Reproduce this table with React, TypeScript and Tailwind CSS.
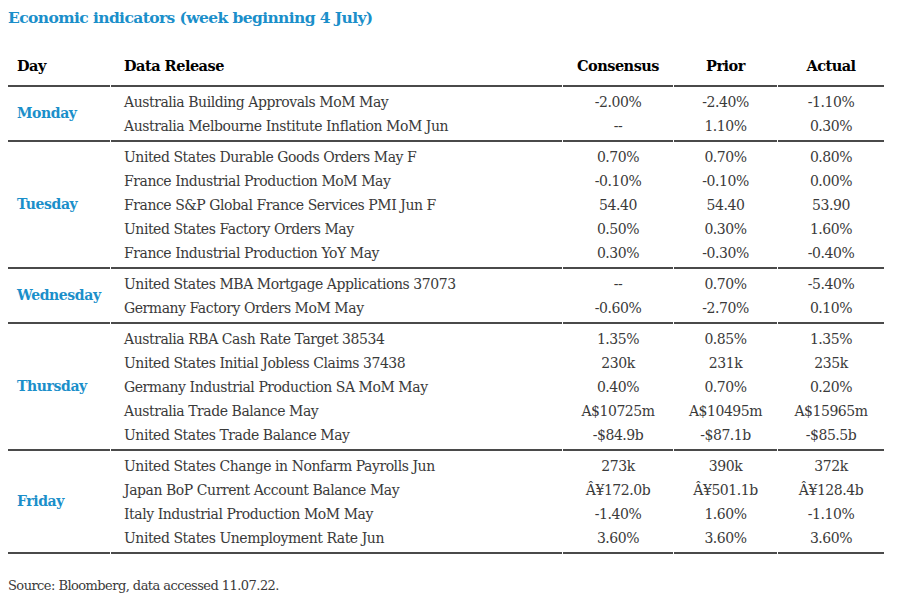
import React from 'react';

interface Release {
  name: string;
  consensus: string;
  prior: string;
  actual: string;
}

interface DayGroup {
  day: string;
  rows: Release[];
}

const data: DayGroup[] = [
  {
    day: 'Monday',
    rows: [
      { name: 'Australia Building Approvals MoM May', consensus: '-2.00%', prior: '-2.40%', actual: '-1.10%' },
      { name: 'Australia Melbourne Institute Inflation MoM Jun', consensus: '--', prior: '1.10%', actual: '0.30%' },
    ],
  },
  {
    day: 'Tuesday',
    rows: [
      { name: 'United States Durable Goods Orders May F', consensus: '0.70%', prior: '0.70%', actual: '0.80%' },
      { name: 'France Industrial Production MoM May', consensus: '-0.10%', prior: '-0.10%', actual: '0.00%' },
      { name: 'France S&P Global France Services PMI Jun F', consensus: '54.40', prior: '54.40', actual: '53.90' },
      { name: 'United States Factory Orders May', consensus: '0.50%', prior: '0.30%', actual: '1.60%' },
      { name: 'France Industrial Production YoY May', consensus: '0.30%', prior: '-0.30%', actual: '-0.40%' },
    ],
  },
  {
    day: 'Wednesday',
    rows: [
      { name: 'United States MBA Mortgage Applications 37073', consensus: '--', prior: '0.70%', actual: '-5.40%' },
      { name: 'Germany Factory Orders MoM May', consensus: '-0.60%', prior: '-2.70%', actual: '0.10%' },
    ],
  },
  {
    day: 'Thursday',
    rows: [
      { name: 'Australia RBA Cash Rate Target 38534', consensus: '1.35%', prior: '0.85%', actual: '1.35%' },
      { name: 'United States Initial Jobless Claims 37438', consensus: '230k', prior: '231k', actual: '235k' },
      { name: 'Germany Industrial Production SA MoM May', consensus: '0.40%', prior: '0.70%', actual: '0.20%' },
      { name: 'Australia Trade Balance May', consensus: 'A$10725m', prior: 'A$10495m', actual: 'A$15965m' },
      { name: 'United States Trade Balance May', consensus: '-$84.9b', prior: '-$87.1b', actual: '-$85.5b' },
    ],
  },
  {
    day: 'Friday',
    rows: [
      { name: 'United States Change in Nonfarm Payrolls Jun', consensus: '273k', prior: '390k', actual: '372k' },
      { name: 'Japan BoP Current Account Balance May', consensus: 'Â¥172.0b', prior: 'Â¥501.1b', actual: 'Â¥128.4b' },
      { name: 'Italy Industrial Production MoM May', consensus: '-1.40%', prior: '1.60%', actual: '-1.10%' },
      { name: 'United States Unemployment Rate Jun', consensus: '3.60%', prior: '3.60%', actual: '3.60%' },
    ],
  },
];

const Cell = ({ children, className = '' }: { children: React.ReactNode; className?: string }) => (
  <div className={`h-6 flex items-center whitespace-nowrap ${className}`}>{children}</div>
);

export default function App() {
  return (
    <div className="w-[900px] h-[600px] bg-white px-2 font-['DejaVu_Serif',serif] text-[#3a3a3a]">
      <h1 className="pt-[7px] leading-[22px] text-[15.5px] font-semibold tracking-[-0.6px] text-[#1b8fca]">
        Economic indicators (week beginning 4 July)
      </h1>

      {/* header */}
      <div className="mt-[18px] flex gap-x-px text-[14.5px] font-bold text-black tracking-[-0.5px]">
        <div className="w-[102px] h-[40px] flex items-center pl-[9px] border-b-2 border-[#4a4a4a]">Day</div>
        <div className="w-[451px] h-[40px] flex items-center pl-[13px] border-b-2 border-[#4a4a4a]">Data Release</div>
        <div className="w-[110px] h-[40px] flex items-center justify-center border-b-2 border-[#4a4a4a]">Consensus</div>
        <div className="w-[103px] h-[40px] flex items-center justify-center border-b-2 border-[#4a4a4a]">Prior</div>
        <div className="w-[106px] h-[40px] flex items-center justify-center border-b-2 border-[#4a4a4a]">Actual</div>
      </div>

      {data.map((g) => (
        <div key={g.day} className="flex gap-x-px text-[14px] tracking-[-0.45px]">
          <div className="w-[102px] flex items-center pl-[9px] border-b-2 border-[#4a4a4a] text-[14px] font-bold text-[#1b8fca] tracking-[-0.4px]">
            {g.day}
          </div>
          <div className="w-[451px] pt-[3px] pb-[2px] pl-[13px] border-b-2 border-[#4a4a4a]">
            {g.rows.map((r) => (
              <Cell key={r.name}>{r.name}</Cell>
            ))}
          </div>
          <div className="w-[110px] pt-[3px] pb-[2px] border-b-2 border-[#4a4a4a]">
            {g.rows.map((r) => (
              <Cell key={r.name} className="justify-center">{r.consensus}</Cell>
            ))}
          </div>
          <div className="w-[103px] pt-[3px] pb-[2px] border-b-2 border-[#4a4a4a]">
            {g.rows.map((r) => (
              <Cell key={r.name} className="justify-center">{r.prior}</Cell>
            ))}
          </div>
          <div className="w-[106px] pt-[3px] pb-[2px] border-b-2 border-[#4a4a4a]">
            {g.rows.map((r) => (
              <Cell key={r.name} className="justify-center">{r.actual}</Cell>
            ))}
          </div>
        </div>
      ))}

      <p className="mt-[22px] text-[13px] tracking-[-0.55px] text-[#3a3a3a]">Source: Bloomberg, data accessed 11.07.22.</p>
    </div>
  );
}
